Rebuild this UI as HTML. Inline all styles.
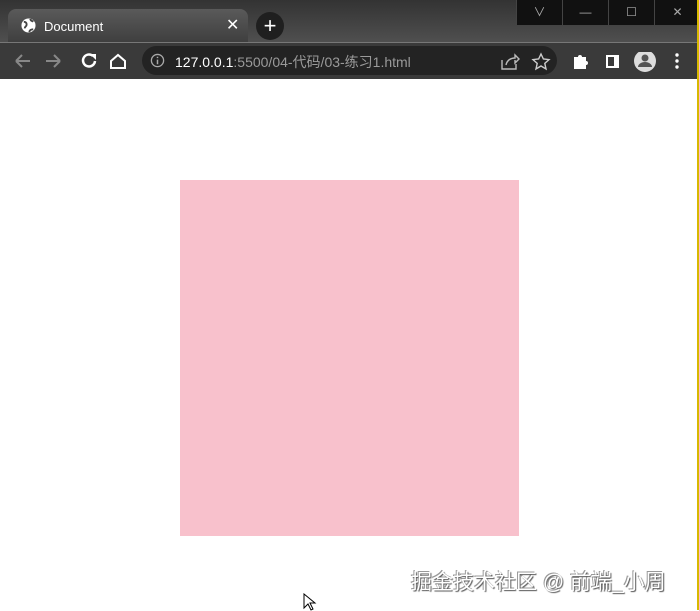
<!DOCTYPE html>
<html><head><meta charset="utf-8"><style>
body{margin:0;width:699px;height:610px;overflow:hidden;background:#fff;font-family:"Liberation Sans","Noto Sans CJK SC",sans-serif;position:relative}
.top{position:absolute;left:0;top:0;width:699px;height:42px;background:linear-gradient(#333,#4f4f4f)}
.tab{position:absolute;left:8px;top:9px;width:240px;height:34px;background:linear-gradient(#5a5a5a,#3e3e3e);border-radius:8px 8px 0 0}
.tab .t{position:absolute;left:36px;top:10px;color:#fff;font-size:13px}
.tab .x{position:absolute;left:218px;top:6px;color:#fff;font-size:16px}
.plus{position:absolute;left:256px;top:12px;width:28px;height:28px;border-radius:50%;background:#1f1f1f;color:#fff;font-size:22px;text-align:center;line-height:27px}
.win{position:absolute;left:516px;top:0;width:183px;height:25px;background:#111}
.win div{position:absolute;top:0;width:45px;height:25px;border-left:1px solid #444;color:#aaa;font-size:12px;text-align:center;line-height:25px}
.bar{position:absolute;left:0;top:42px;width:699px;height:36px;background:#3a3a3a;border-top:1px solid #777}
.addr{position:absolute;left:142px;top:46px;width:415px;height:29px;background:#232323;border-radius:15px}
.url{position:absolute;left:175px;top:52px;font-size:14px;color:#fff}
.url span{color:#9a9a9a}
.pink{position:absolute;left:180px;top:180px;width:339px;height:356px;background:#f8c1cc}
.wm{position:absolute;left:411px;top:566px;font-size:21px;color:#fff;text-shadow:1px 1px 1px #555,-1px -1px 0 #999}
.yl{position:absolute;left:697px;top:0;width:2px;height:610px;background:#d8b800}
</style></head><body>
<div class="top"></div>
<div class="tab">
<svg style="position:absolute;left:13px;top:9px" width="15" height="15" viewBox="0 0 16 16"><circle cx="8" cy="8" r="7.5" fill="#fff"/><path d="M3 4c2 0 3 1 3 3s-2 2-2 4M10 1c0 2 2 2 3 3M9 15c0-2 2-3 4-3" stroke="#444" stroke-width="2" fill="none"/></svg>
<div class="t">Document</div><div class="x">✕</div></div>
<div class="plus">+</div>
<div class="win"><div style="left:0">∨</div><div style="left:46px">—</div><div style="left:92px">☐</div><div style="left:138px">✕</div></div>
<div class="bar"></div>
<svg style="position:absolute;left:12px;top:52px" width="120" height="18" viewBox="0 0 120 18" fill="none" stroke-width="2">
<path d="M4 9h14M4 9l6-6M4 9l6 6" stroke="#888"/>
<path d="M34 9h14M48 9l-6-6M48 9l-6 6" stroke="#888"/>
<path d="M81 4a6 6 0 1 0 2 5" stroke="#fff" stroke-width="2.5"/><path d="M78 2h6v6z" fill="#fff" stroke="none"/>
<path d="M99 9l7-6 7 6v7h-14z" stroke="#fff" stroke-width="2"/>
</svg>
<div class="addr"></div>
<svg style="position:absolute;left:150px;top:53px" width="15" height="15" viewBox="0 0 16 16"><circle cx="8" cy="8" r="6.5" stroke="#aaa" fill="none" stroke-width="1.4"/><path d="M8 7v5M8 4v1.5" stroke="#aaa" stroke-width="1.6"/></svg>
<div class="url">127.0.0.1<span>:5500/04-代码/03-练习1.html</span></div>
<svg style="position:absolute;left:500px;top:52px" width="190" height="20" viewBox="0 0 190 20">
<path d="M2 8v9h14v-5M6 13c1-5 5-7 9-7V3l4 4-4 4V8" stroke="#bbb" fill="none" stroke-width="1.4"/>
<path d="M41 2l2.4 5 5.6.6-4.2 3.8 1.2 5.6-5-3-5 3 1.2-5.6L33 7.6l5.6-.6z" stroke="#ccc" fill="none" stroke-width="1.4"/>
<path d="M74 5h4a2 2 0 0 1 4 0h4v4a2 2 0 0 1 0 4v4h-12z" fill="#fff"/>
<rect x="106" y="3" width="13" height="13" fill="#fff"/><rect x="108" y="5" width="6" height="9" fill="#3a3a3a"/>
<circle cx="145" cy="9" r="11" fill="#ddd"/><circle cx="145" cy="6" r="3.5" fill="#555"/><path d="M138 15a7 5 0 0 1 14 0z" fill="#555"/>
<circle cx="177" cy="3" r="1.7" fill="#fff"/><circle cx="177" cy="9" r="1.7" fill="#fff"/><circle cx="177" cy="15" r="1.7" fill="#fff"/>
</svg>
<div class="pink"></div>
<div class="wm">掘金技术社区 @ 前端_小周</div>
<svg style="position:absolute;left:303px;top:593px" width="14" height="18" viewBox="0 0 14 18"><path d="M1 1v14l4-4 3 6 2-1-3-6h5z" fill="#fff" stroke="#000"/></svg>
<div class="yl"></div>
</body></html>
